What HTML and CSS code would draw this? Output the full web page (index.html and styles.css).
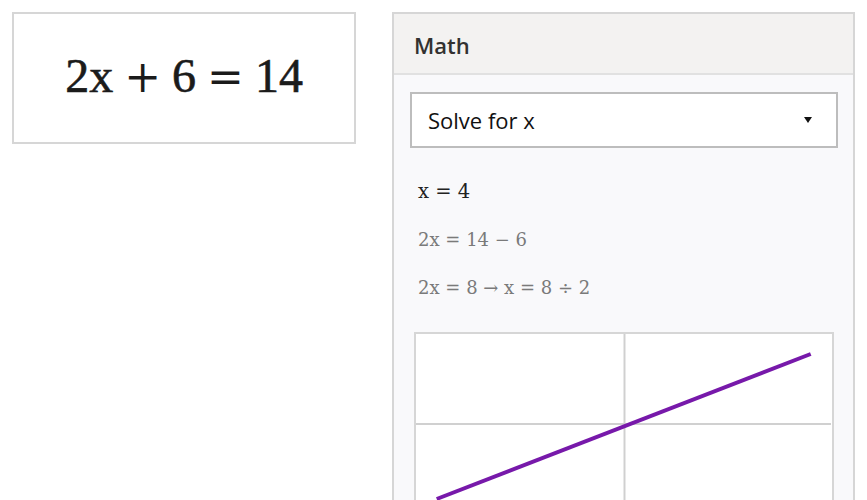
FILE: index.html
```html
<!DOCTYPE html>
<html>
<head>
<meta charset="utf-8">
<link rel="stylesheet" href="styles.css">
</head>
<body>
<div class="page">
  <div class="equation-card">
    <div class="equation">2x<span class="op">+</span>6<span class="op">=</span>14</div>
  </div>
  <div class="panel">
    <div class="panel-header">Math</div>
    <div class="panel-body">
      <div class="select">
        <span class="select-label">Solve for x</span>
        <span class="select-arrow"></span>
      </div>
      <div class="steps">
        <div class="step step-answer">x = 4</div>
        <div class="step step-muted">2x = 14 − 6</div>
        <div class="step step-muted">2x = 8 → x = 8 ÷ 2</div>
      </div>
      <div class="graph">
        <svg class="graph-svg" viewBox="0 0 415 180" width="415" height="180">
          <line x1="208.5" y1="0" x2="208.5" y2="180" stroke="#d0d0d0" stroke-width="2"/>
          <line x1="0" y1="90" x2="415" y2="90" stroke="#d0d0d0" stroke-width="2"/>
          <line x1="20.7" y1="165" x2="394.7" y2="20" stroke="#7719aa" stroke-width="4"/>
        </svg>
      </div>
    </div>
  </div>
</div>
</body>
</html>
```
FILE: styles.css
```css
html, body {
  margin: 0;
  padding: 0;
  background: #ffffff;
  overflow: hidden;
}

.page {
  display: flex;
  align-items: flex-start;
  gap: 36px;
  padding: 12px;
}

.equation-card {
  box-sizing: border-box;
  width: 344px;
  height: 132px;
  border: 2px solid #d6d6d6;
  display: flex;
  align-items: center;
  justify-content: center;
}

.equation {
  font-family: "Liberation Serif", serif;
  font-size: 48px;
  line-height: 56px;
  color: #1b1b1b;
  margin-top: -4px;
  -webkit-text-stroke: 0.6px #1b1b1b;
}

.equation .op {
  font-family: "DejaVu Serif", serif;
  font-size: 44px;
  margin: 0 11px;
  -webkit-text-stroke: 0;
}

.panel {
  box-sizing: border-box;
  width: 463px;
  border: 2px solid #d6d6d6;
  background: #f9f9fb;
}

.panel-header {
  box-sizing: border-box;
  height: 61px;
  padding: 16px 0 0 20px;
  background: #f3f2f1;
  border-bottom: 2px solid #e1e1e1;
  font-family: "Open Sans", sans-serif;
  font-weight: 600;
  font-size: 22px;
  line-height: 30px;
  color: #323130;
}

.panel-body {
  padding: 17px 15px 0 16px;
}

.select {
  box-sizing: border-box;
  height: 56px;
  border: 2px solid #bdbdbd;
  background: #ffffff;
  display: flex;
  align-items: center;
  justify-content: space-between;
  padding: 0 24px 0 16px;
}

.select-label {
  font-family: "Open Sans", sans-serif;
  font-size: 22px;
  line-height: 30px;
  color: #111111;
}

.select-arrow {
  width: 0;
  height: 0;
  border-left: 4px solid transparent;
  border-right: 4px solid transparent;
  border-top: 6px solid #111111;
}

.steps {
  padding: 0 8px;
  margin-top: 20px;
}

.step {
  font-family: "DejaVu Serif", serif;
  height: 48px;
  line-height: 48px;
  white-space: nowrap;
}

.step-answer {
  font-size: 19.5px;
  color: #222222;
}

.step-muted {
  font-size: 18px;
  color: #7a7a7a;
}

.graph {
  margin: 20px 4px 0 4px;
  border: 2px solid #d6d6d6;
  background: #ffffff;
  height: 180px;
}

.graph-svg {
  display: block;
}
```
